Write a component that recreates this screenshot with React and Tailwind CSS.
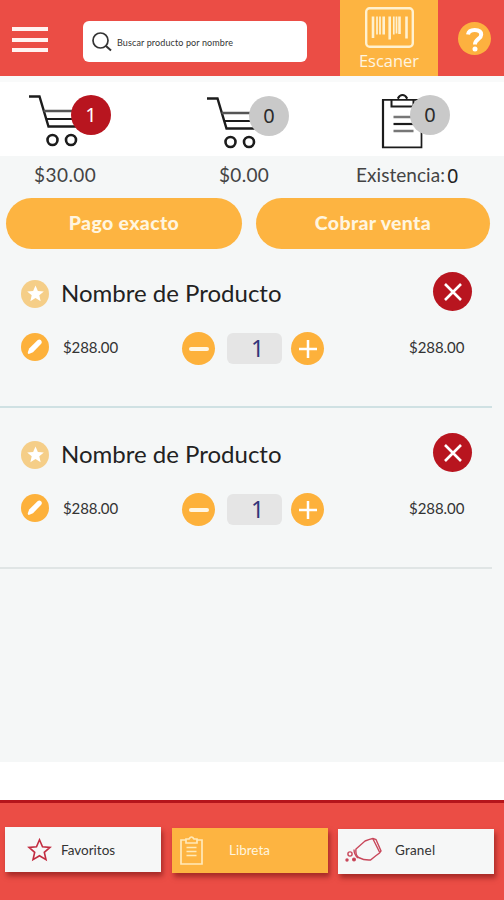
import React, { useState } from "react";

const initialProducts = [
  { id: 1, name: "Nombre de Producto", price: 288, qty: 1, divider: "border-[#cfe1e3]" },
  { id: 2, name: "Nombre de Producto", price: 288, qty: 1, divider: "border-[#e0e5e5]" },
];

const STAR = "M12 1.8l3 6.9 7.5.7-5.7 4.9 1.7 7.4L12 17.8l-6.5 3.9 1.7-7.4L1.5 9.4l7.5-.7z";

const CartIcon = () => (
  <svg width="56" height="54" viewBox="0 0 56 54" fill="none" stroke="#1c1c1c">
    <path d="M1 2.500h10.500l9 30h34" strokeWidth="2.400" />
    <path d="M15.500 17h36" strokeWidth="2.600" stroke="#555" />
    <path d="M18 25h35" strokeWidth="2" />
    <circle cx="24.500" cy="46" r="5" strokeWidth="2.600" />
    <circle cx="43" cy="46" r="5" strokeWidth="2.600" />
  </svg>
);

const ClipboardIcon = () => (
  <svg width="42" height="56" viewBox="0 0 42 56" fill="none" stroke="#1c1c1c">
    <path d="M2 6.500v48.300" strokeWidth="2.200" />
    <path d="M1 6.800h39.500v47.600H1" strokeWidth="1.700" />
    <path d="M10.500 6.500v7h22v-7" strokeWidth="2" />
    <path d="M16.500 6c.8 0 1-4 5-4s4.200 4 5 4" strokeWidth="2.200" />
    <path d="M12.500 24h19M12.500 38h20" strokeWidth="2.400" stroke="#777" />
    <path d="M12.500 31h20" strokeWidth="2.200" />
  </svg>
);

const Badge = ({ value, className }) => (
  <span
    className={`absolute flex h-10 w-10 items-center justify-center rounded-full font-['Noto_Sans',sans-serif] text-[20px] ${className}`}
  >
    {value}
  </span>
);

const Header = () => (
  <header className="flex h-[76px] shrink-0 bg-[#eb4d45]">
    <button className="ml-3 mt-[27px] flex h-[25px] w-9 flex-col justify-between">
      <span className="h-1 w-full bg-[#fff3f1]" />
      <span className="h-1 w-full bg-[#fff3f1]" />
      <span className="h-1 w-full bg-[#fff3f1]" />
    </button>
    <label className="ml-[35px] mt-[21px] flex h-[41px] w-[224px] items-center rounded-md bg-white pl-[9px]">
      <svg width="20" height="20" viewBox="0 0 20 20" fill="none" stroke="#333" strokeWidth="1.700">
        <circle cx="8.500" cy="8.500" r="7.500" />
        <path d="M14 14l5 4.500" strokeWidth="2" />
      </svg>
      <span className="ml-[5px] mt-[2px] whitespace-nowrap font-['Lato',sans-serif] text-[9px] tracking-[0.120px] text-[#333]">
        Buscar producto por nombre
      </span>
    </label>
    <button className="ml-[33px] flex w-[98px] flex-col items-center bg-[#fdb441] pt-[7px]">
      <svg width="49" height="41" viewBox="0 0 49 41" fill="none" stroke="#fff1cf">
        <rect x="1.200" y="1.200" width="46.600" height="38.600" rx="3.500" strokeWidth="2.400" />
        <path d="M8 9.500v21.500M18.700 9.500v18M24.700 9.500v23M34.500 9.500v17.500M41.500 9.500v22" strokeWidth="2.600" />
        <path d="M12 9.500v18M15 9.500v18M28.800 9.500v18M31.500 9.500v17" strokeWidth="1.700" />
      </svg>
      <span className="mt-px font-['Open_Sans',sans-serif] text-[16.500px] font-medium leading-6 text-[#fff5e0]">
        Escaner
      </span>
    </button>
    <button className="ml-5 mt-[22px] flex h-[33px] w-[33px] items-center justify-center rounded-full bg-[#fdb13f]">
      <svg width="20" height="26" viewBox="0 0 20 26" fill="none" stroke="#fff" strokeWidth="4">
        <path d="M3 8.500C3.500 5.500 6.500 4 9.700 4c4 0 6.500 1.700 6.500 4.700C16.200 13 10 13 10 18.500" />
        <circle cx="10" cy="23" r="2.500" fill="#fff" stroke="none" />
      </svg>
    </button>
  </header>
);

const Summary = () => (
  <section className="shrink-0">
    <div className="flex h-20 border-t-[6px] border-[#f9fafa] bg-white">
      <div className="relative ml-7 mt-[12px] w-[178px]">
        <CartIcon />
        <Badge value={1} className="left-[43px] top-px bg-[#b8151f] text-white" />
      </div>
      <div className="relative mt-[14px] w-[175px]">
        <CartIcon />
        <Badge value={0} className="left-[43px] top-0 bg-[#c9c9c9] text-[#2b2b2b]" />
      </div>
      <div className="relative mt-[11px]">
        <ClipboardIcon />
        <Badge value={0} className="left-[29px] top-[2px] bg-[#c9c9c9] text-[#2b2b2b]" />
      </div>
    </div>
    <div className="flex h-[41px] items-center whitespace-nowrap pb-0.5 font-['Lato',sans-serif] text-[19px] text-[#444]">
      <span className="ml-[34px] w-[185px] tracking-[0.450px]">$30.00</span>
      <span className="w-[137px] tracking-[0.300px]">$0.00</span>
      <span className="tracking-[0.050px]">Existencia:</span>
      <span className="ml-[2px] font-['Noto_Sans',sans-serif] text-[20px] text-[#222]">0</span>
    </div>
    <div className="flex gap-[14px] pl-[6px] pt-px font-['Lato',sans-serif] text-[19.500px] font-black tracking-[0.350px] text-[#fff5df]">
      <button className="h-[51px] w-[236px] rounded-full bg-[#fdb441] pb-px">Pago exacto</button>
      <button className="h-[51px] w-[234px] rounded-full bg-[#fdb441] pb-px">Cobrar venta</button>
    </div>
  </section>
);

const Product = ({ product, onChange }) => {
  const unit = `$${product.price.toFixed(2)}`;
  const total = `$${(product.price * product.qty).toFixed(2)}`;

  return (
    <article className={`h-[161px] w-[492px] border-b-2 pl-[21px] pt-[25px] ${product.divider}`}>
      <div className="flex h-[39px] items-center">
        <span className="mt-[4px] flex h-7 w-7 items-center justify-center rounded-full bg-[#f5ce88]">
          <svg width="19" height="19" viewBox="0 0 24 24" fill="#fff">
            <path d={STAR} />
          </svg>
        </span>
        <h2 className="ml-[12px] mt-[2px] w-[372px] whitespace-nowrap font-['Lato',sans-serif] text-[24px] text-[#222]">
          {product.name}
        </h2>
        <button className="flex h-[39px] w-[39px] items-center justify-center rounded-full bg-[#b8151f]">
          <svg width="18" height="18" viewBox="0 0 18 18" stroke="#fff" strokeWidth="2.600">
            <path d="M1 1l16 16M17 1L1 17" />
          </svg>
        </button>
      </div>
      <div className="mt-[21px] flex h-[33px] items-center font-['Lato',sans-serif] text-[15px] text-[#333]">
        <button className="mb-[3px] flex h-7 w-7 items-center justify-center rounded-full bg-[#fdb13b]">
          <svg width="18" height="18" viewBox="0 0 18 18" fill="#fff">
            <path d="M3.200 10.500L11.500 2.300q1.900-1.500 3.500 0t.2 3.500L7 14.200l-3.600 1.600q-1.900.5-1.600-1.500z" />
          </svg>
        </button>
        <span className="mb-[2px] ml-[14px] w-[119px] tracking-[-0.100px]">{unit}</span>
        <button
          className="flex h-[33px] w-[33px] items-center justify-center rounded-full bg-[#fdb13b]"
          onClick={() => onChange(Math.max(1, product.qty - 1))}
        >
          <span className="h-[4px] w-5 rounded-sm bg-[#fff6e4]" />
        </button>
        <span className="ml-[12px] flex h-[31px] w-[55px] items-center justify-center rounded-[6px] bg-[#e5e5e5] pl-1.5 font-['Noto_Sans',sans-serif] text-[23px] text-[#34347a]">
          {product.qty}
        </span>
        <button
          className="ml-[9px] flex h-[33px] w-[33px] items-center justify-center rounded-full bg-[#fdb13b]"
          onClick={() => onChange(product.qty + 1)}
        >
          <svg width="18" height="18" viewBox="0 0 18 18" stroke="#fff" strokeWidth="2.500">
            <path d="M9 0v18M0 9h18" />
          </svg>
        </button>
        <span className="mb-[2px] ml-[85px] tracking-[-0.050px]">{total}</span>
      </div>
    </article>
  );
};

const Footer = () => (
  <footer className="flex h-[100px] shrink-0 border-t-[3px] border-[#b5151b] bg-[#eb4d45] pl-[5px] font-['Lato',sans-serif] text-[13.500px] text-[#333]">
    <button className="mt-[24px] flex h-[45px] w-[156px] items-center bg-[#f6f7f7] pl-[22px] shadow-[2px_4px_5px_rgba(110,15,15,0.55)]">
      <svg width="25" height="24" viewBox="0 0 24 24" fill="none" stroke="#c22c40" strokeWidth="1.600">
        <path d={STAR} />
      </svg>
      <span className="ml-[9px] mt-0.5">Favoritos</span>
    </button>
    <button className="ml-[11px] mt-[25px] flex h-[45px] w-[156px] items-center bg-[#fdb441] pl-[8px] text-[#fff5df] shadow-[2px_4px_5px_rgba(110,15,15,0.55)]">
      <svg width="23" height="29" viewBox="0 0 23 29" fill="none" stroke="#ffe9b9" strokeWidth="1.700">
        <path d="M6 4H1v24h21V4h-5" />
        <path d="M6 3h3q2.500-4 5 0h3v4H6zM6.500 11.500h10M6.500 15.500h10M6.500 19.500h10" />
      </svg>
      <span className="ml-[26px]">Libreta</span>
    </button>
    <button className="ml-[10px] mt-[26px] flex h-[45px] w-[156px] items-center bg-[#f6f7f7] pl-[7px] shadow-[2px_4px_5px_rgba(110,15,15,0.55)]">
      <svg className="mb-[3px]" width="37" height="26" viewBox="0 0 37 26" fill="none" stroke="#c8475a" strokeWidth="1.400">
        <path d="M11 12L20 4q5-2 8-2.500l3 1L36 14l-1.500 2-4 3-5 4q-6 .5-12-2.500Q10 17 11 12z" />
        <path d="M28 2l6.500 13M9 12.500q0 5 4 8.500" />
        <circle cx="5" cy="17" r="2.100" />
        <circle cx="2" cy="23" r="1" fill="#c22c40" />
        <circle cx="9" cy="22.500" r="1.300" fill="#c22c40" />
      </svg>
      <span className="mb-0.5 ml-[13px] tracking-[0.200px]">Granel</span>
    </button>
  </footer>
);

const App = () => {
  const [products, setProducts] = useState(initialProducts);

  const setQty = (id, qty) => {
    setProducts((prev) => prev.map((p) => (p.id === id ? { ...p, qty } : p)));
  };

  return (
    <div className="flex h-[900px] w-[504px] flex-col overflow-hidden bg-[#f5f7f7]">
      <Header />
      <Summary />
      <main className="-mt-0.5 flex-1">
        {products.map((p) => (
          <Product key={p.id} product={p} onChange={(qty) => setQty(p.id, qty)} />
        ))}
      </main>
      <div className="h-[38px] shrink-0 bg-white" />
      <Footer />
    </div>
  );
};

export default App;
